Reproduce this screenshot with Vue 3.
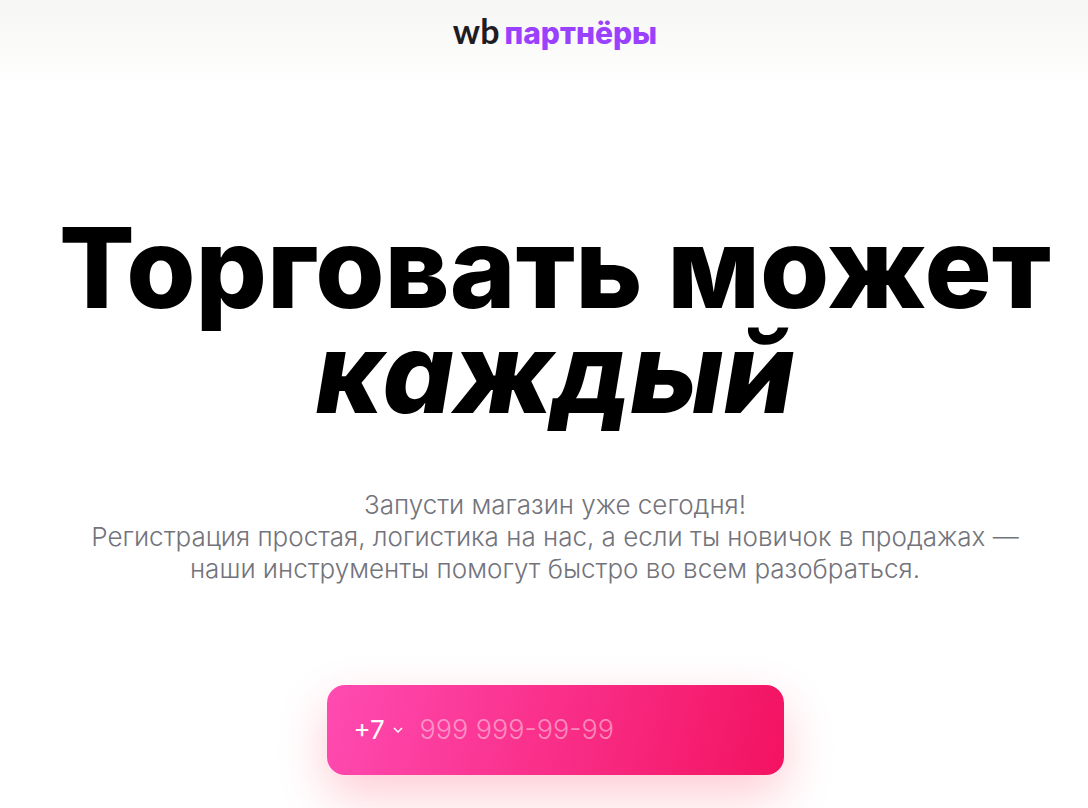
<script setup>
import { ref } from 'vue'

const country = ref('+7')
const phone = ref('')
</script>

<template>
  <div class="page">
    <header class="header">
      <a class="logo" href="#" aria-label="wb партнёры">
        <span class="logo-wb">wb</span>
        <span class="logo-name">партнёры</span>
      </a>
    </header>
    <main class="hero">
      <h1 class="title">
        <span class="title-line">Торговать может</span>
        <em class="title-accent">каждый</em>
      </h1>
      <p class="lead">
        Запусти магазин уже сегодня!<br />
        Регистрация простая, логистика на нас, а если ты новичок в продажах —<br />
        наши инструменты помогут быстро во всем разобраться.
      </p>
      <form class="phone" @submit.prevent>
        <div class="code">
          <select v-model="country" class="code-select" aria-label="Код страны">
            <option>+7</option>
          </select>
          <svg class="chevron" viewBox="0 0 10 6" width="10" height="6" aria-hidden="true">
            <path d="M1 1l4 4 4-4" fill="none" stroke="#fff" stroke-width="1.5" />
          </svg>
        </div>
        <input v-model="phone" class="number" type="tel" placeholder="999 999-99-99" aria-label="Номер телефона" />
      </form>
    </main>
  </div>
</template>

<style>
body {
  background: #fff;
}
</style>

<style scoped>
.page {
  box-sizing: border-box;
  min-height: 100vh;
  padding-left: 22px;
  overflow: hidden;
  background: linear-gradient(#f6f6f4, #fff 90px);
  font-family: Inter, "Liberation Sans", sans-serif;
}
.header {
  display: flex;
  justify-content: center;
  padding-top: 11px;
}
.logo {
  display: flex;
  align-items: baseline;
  gap: 5px;
  line-height: 40px;
  text-decoration: none;
}
.logo-wb {
  color: #1f1c22;
  font: 700 34px/40px Lato, sans-serif;
}
.logo-name {
  color: #9a41fe;
  font-size: 30px;
  font-weight: 800;
}
.hero {
  display: flex;
  flex-direction: column;
  align-items: center;
  padding: 162px 20px 33px;
}
.title {
  margin: 0;
  color: #000;
  font-size: 112px;
  font-weight: 800;
  line-height: 105px;
  text-align: center;
}
.title-line,
.title-accent {
  display: block;
  white-space: nowrap;
}
.title-accent {
  clip-path: inset(0 -20px -20px);
}
.lead {
  margin: 64px 0 0;
  color: #73737b;
  font-size: 26px;
  font-weight: 300;
  line-height: 32px;
  text-align: center;
  white-space: nowrap;
}
.phone {
  box-sizing: border-box;
  display: flex;
  align-items: center;
  gap: 16px;
  width: 100%;
  max-width: 457px;
  height: 90px;
  margin-top: 100px;
  padding: 0 27px;
  border-radius: 18px;
  background: linear-gradient(105deg, #ff4bb2, #f31260);
  box-shadow: 0 20px 50px rgba(249, 36, 75, 0.24);
}
.code {
  position: relative;
  display: flex;
  align-items: center;
}
.code-select {
  appearance: none;
  margin: 0;
  padding: 0 18px 0 0;
  border: 0;
  outline: 0;
  background: transparent;
  color: #fff;
  font: 400 26px/32px Inter, sans-serif;
}
.chevron {
  position: absolute;
  right: 1px;
  pointer-events: none;
}
.number {
  flex: 1;
  min-width: 0;
  padding: 0;
  border: 0;
  outline: 0;
  background: transparent;
  color: #fff;
  font: 300 27px/32px Inter, sans-serif;
}
.number::placeholder {
  color: rgba(255, 255, 255, 0.45);
  opacity: 1;
}
</style>
